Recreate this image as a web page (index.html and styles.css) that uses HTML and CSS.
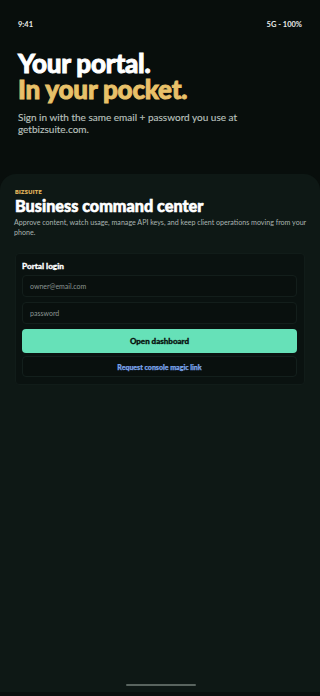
FILE: index.html
```html
<!DOCTYPE html>
<html lang="en">
<head>
<meta charset="utf-8">
<meta name="viewport" content="width=device-width, initial-scale=1">
<title>BizSuite Portal</title>
<link rel="stylesheet" href="styles.css">
</head>
<body>
<div class="screen">
  <div class="status">
    <span>9:41</span>
    <span>5G - 100%</span>
  </div>
  <div class="hero">
    <h1 class="hero-title"><span class="line-white">Your portal.</span><span class="line-gold">In your pocket.</span></h1>
    <p class="hero-sub">Sign in with the same email + password you use at getbizsuite.com.</p>
  </div>
  <div class="card">
    <div class="eyebrow">BIZSUITE</div>
    <h2 class="card-title">Business command center</h2>
    <p class="card-desc">Approve content, watch usage, manage API keys, and keep client operations moving from your phone.</p>
    <div class="panel">
      <div class="panel-title">Portal login</div>
      <div class="field">owner@email.com</div>
      <div class="field">password</div>
      <button class="btn-primary">Open dashboard</button>
      <button class="btn-secondary">Request console magic link</button>
    </div>
    <div class="spacer"></div>
    <div class="home-indicator"></div>
  </div>
  <div class="bottom-edge"></div>
</div>
</body>
</html>
```
FILE: styles.css
```css
html, body {
  margin: 0;
  padding: 0;
  background: #080e0c;
}
.screen {
  width: 320px;
  height: 696px;
  display: flex;
  flex-direction: column;
  background: #080e0c;
  font-family: Lato, "Noto Sans", sans-serif;
  color: #ffffff;
  overflow: hidden;
}
.status {
  display: flex;
  justify-content: space-between;
  padding: 20px 18px 0 18px;
  font-size: 7.5px;
  line-height: 10px;
  font-weight: 700;
  color: #e8ecea;
}
.hero {
  padding: 20px 18px 0 18px;
}
.hero-title {
  margin: 0;
  font-size: 26px;
  line-height: 26px;
  font-weight: 900;
  display: flex;
  flex-direction: column;
  -webkit-text-stroke: 0.9px currentColor;
  letter-spacing: -0.2px;
}
.line-white { color: #ffffff; }
.line-gold { color: #e8c169; }
.hero-sub {
  margin: 9px 0 0 0;
  font-size: 10px;
  line-height: 12px;
  color: #b8c0bd;
  font-weight: 400;
  -webkit-text-stroke: 0.15px currentColor;
}
.card {
  margin-top: 39px;
  flex: 1;
  display: flex;
  flex-direction: column;
  background: #0e1815;
  border-radius: 16px 16px 0 0;
  padding: 14px 13px 0 14px;
}
.eyebrow {
  font-size: 5.5px;
  line-height: 8px;
  font-weight: 900;
  letter-spacing: 0.4px;
  color: #e2b85e;
  margin-left: 1px;
  -webkit-text-stroke: 0.2px currentColor;
}
.card-title {
  margin: 0;
  font-size: 16.2px;
  line-height: 20px;
  font-weight: 900;
  color: #ffffff;
  margin-left: 1px;
  -webkit-text-stroke: 0.6px currentColor;
}
.card-desc {
  margin: 2px 0 0 0;
  font-size: 7.1px;
  line-height: 10px;
  color: #a9b3b0;
}
.panel {
  margin: 15px 2px 0 1px;
  background: #0a1210;
  border: 1px solid #111c19;
  border-radius: 4px;
  padding: 7px 7px 7px 6px;
  display: flex;
  flex-direction: column;
  gap: 5px;
}
.panel-title {
  font-size: 8.2px;
  line-height: 10px;
  font-weight: 900;
  color: #ffffff;
  margin-bottom: -1px;
  -webkit-text-stroke: 0.3px currentColor;
}
.field {
  height: 22px;
  box-sizing: border-box;
  border: 1px solid #131e1b;
  border-radius: 4px;
  background: #09100e;
  padding: 0 7px;
  display: flex;
  align-items: center;
  font-size: 7px;
  color: #8b9592;
}
.btn-primary {
  height: 24px;
  border: none;
  border-radius: 4px;
  background: #66e1b8;
  color: #07110d;
  font-family: Lato, "Noto Sans", sans-serif;
  font-size: 8px;
  font-weight: 900;
  padding: 0;
  -webkit-text-stroke: 0.3px currentColor;
}
.btn-secondary {
  height: 21px;
  margin-top: -2px;
  border: 1px solid #131f1c;
  border-radius: 4px;
  background: #09100e;
  color: #7aa3ea;
  font-family: Lato, "Noto Sans", sans-serif;
  font-size: 7px;
  font-weight: 900;
  padding: 0;
  -webkit-text-stroke: 0.25px currentColor;
}
.spacer {
  flex: 1;
}
.home-indicator {
  align-self: center;
  width: 70px;
  height: 2px;
  border-radius: 1px;
  background: #59645f;
  margin-bottom: 6px;
}
.bottom-edge {
  height: 4px;
  background: #0a0f0e;
}
```
